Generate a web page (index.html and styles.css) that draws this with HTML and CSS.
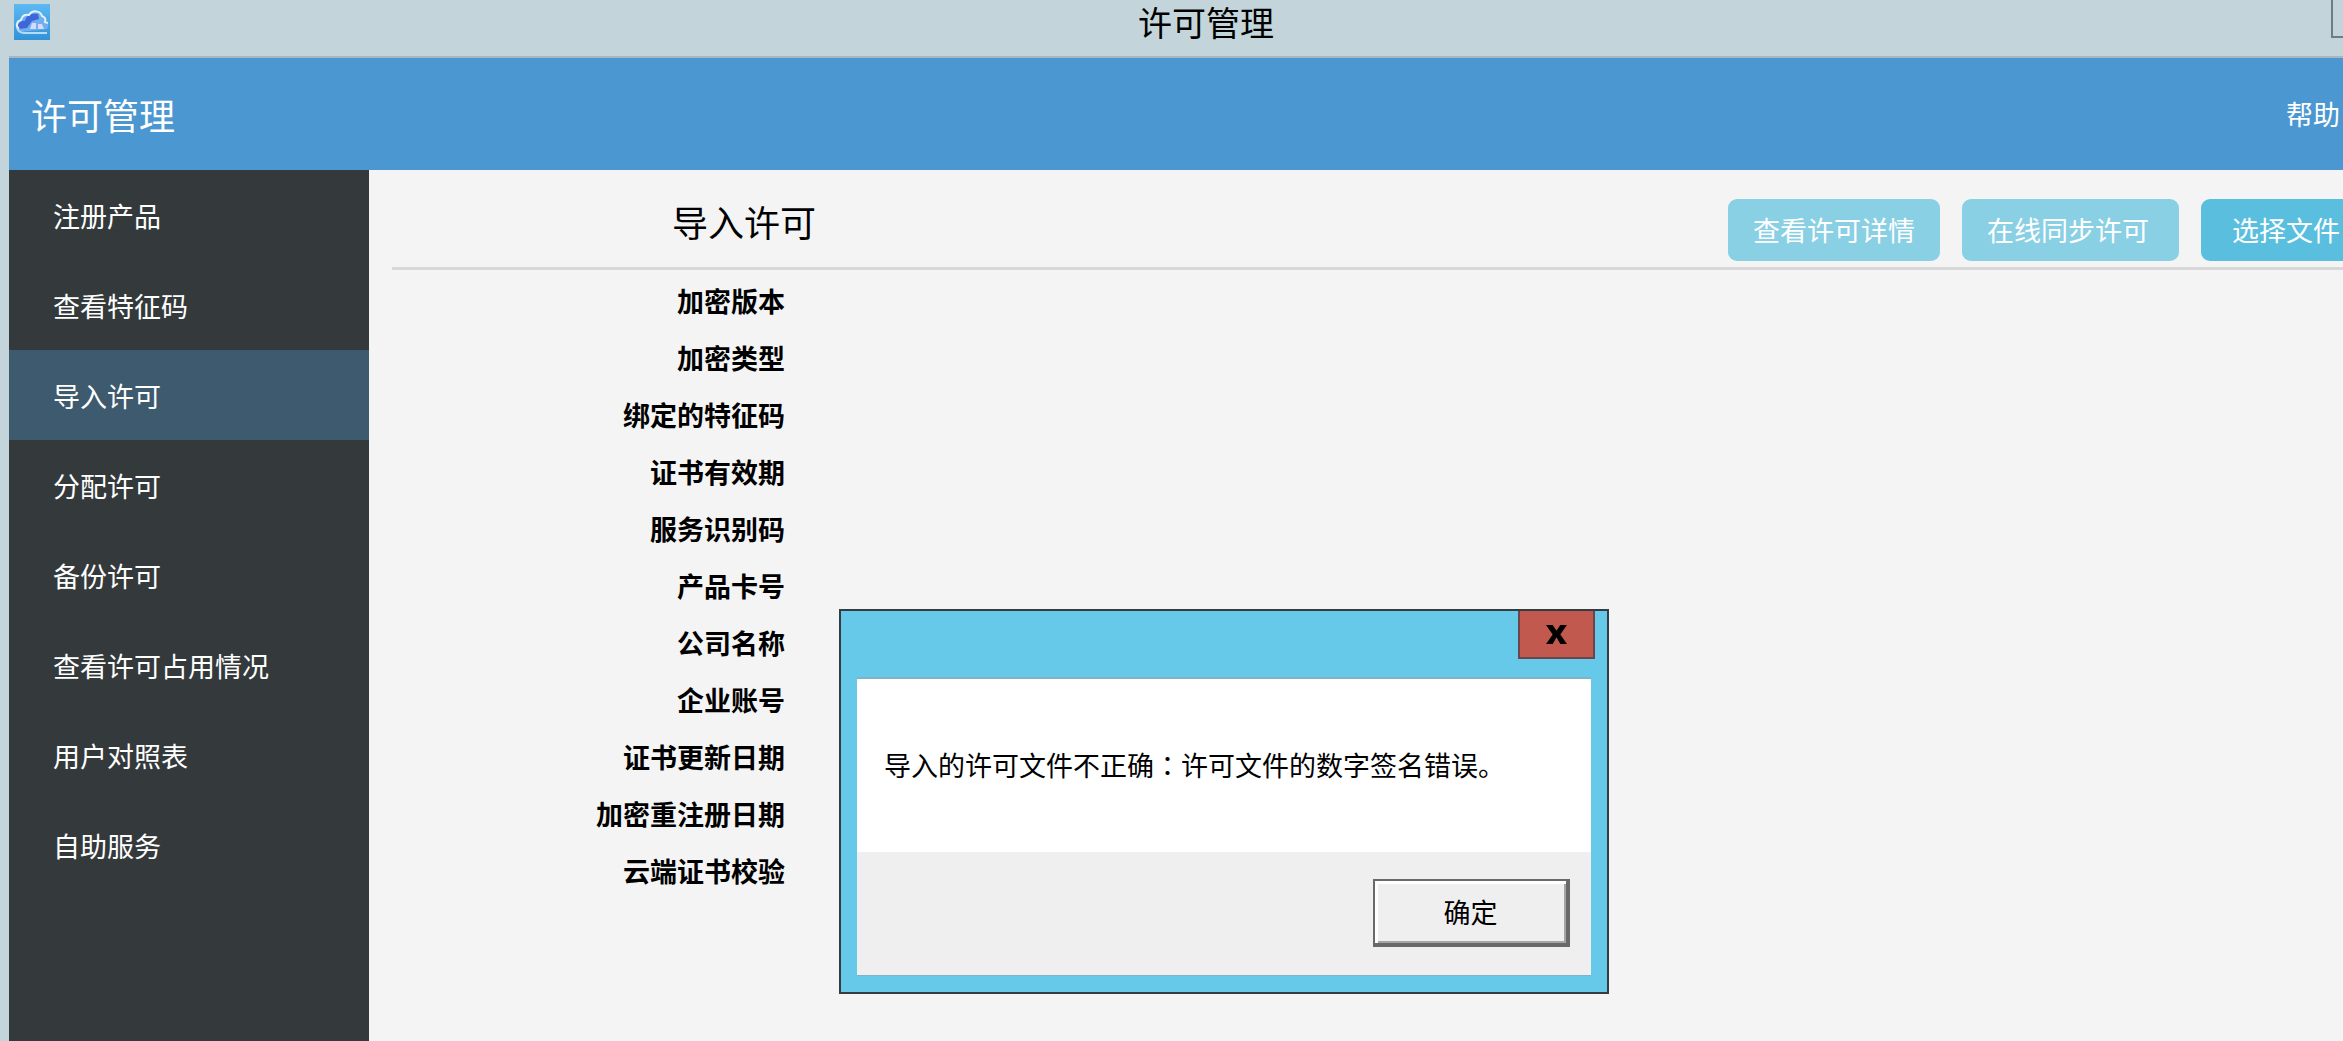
FILE: index.html
```html
<!DOCTYPE html>
<html lang="zh-CN">
  <head>
    <meta charset="utf-8" />
    <meta name="viewport" content="width=device-width, initial-scale=1.0" />
    <title>许可管理</title>
    <link rel="stylesheet" href="styles.css">
  </head>

  <body>
    <div class="window">
      <div class="titlebar">
        <svg class="app-icon" viewBox="0 0 36 36" aria-hidden="true">
          <defs>
            <linearGradient id="icon-bg" x1="0" y1="0" x2="0" y2="1">
              <stop offset="0" stop-color="#5cb9f2" />
              <stop offset="1" stop-color="#3192d6" />
            </linearGradient>
          </defs>
          <rect width="36" height="36" fill="url(#icon-bg)" />
          <path d="M6 28C1 26 1 19 6 17C6 12 11 10 14 12C17 6 26 6 28 12C31 12 32 15 31 18C35 19 35 23 33 25Z" fill="#70aeee" />
          <path d="M5 25C2 20 7 16 11 17C12 11 18 9 24 10L25 15L18 17L13 24Z" fill="#3f66d8" />
          <path d="M16 25L18 19L22 19L22 25ZM24 25L24 20L28 20L30 25Z" fill="#d5d9fb" />
          <path d="M5 25C1 22 3 17 7 16C8 11 12 10 15 11C18 6 26 6 28 12C31 13 32 15 31 18L34 19" fill="none" stroke="#e4efff" stroke-width="2" />
          <path d="M3 24Q5 29 10 29H33" fill="none" stroke="#b5dbfa" stroke-width="2" />
        </svg>
        <span class="window-title">许可管理</span>
        <button class="window-control" aria-label="最小化"></button>
      </div>

      <header class="app-header">
        <span class="app-name">许可管理</span>
        <a href="#" class="help-link">帮助</a>
      </header>

      <div class="app-body">
        <nav class="sidebar">
          <a href="#">注册产品</a>
          <a href="#">查看特征码</a>
          <a href="#" class="active">导入许可</a>
          <a href="#">分配许可</a>
          <a href="#">备份许可</a>
          <a href="#">查看许可占用情况</a>
          <a href="#">用户对照表</a>
          <a href="#">自助服务</a>
        </nav>

        <main class="content">
          <div class="page-head">
            <h1>导入许可</h1>
            <div class="actions">
              <button class="btn" disabled>查看许可详情</button>
              <button class="btn btn-sync" disabled>在线同步许可</button>
              <button class="btn btn-wide">选择文件</button>
            </div>
          </div>
          <dl class="license-info">
            <dt>加密版本</dt><dd></dd>
            <dt>加密类型</dt><dd></dd>
            <dt>绑定的特征码</dt><dd></dd>
            <dt>证书有效期</dt><dd></dd>
            <dt>服务识别码</dt><dd></dd>
            <dt>产品卡号</dt><dd></dd>
            <dt>公司名称</dt><dd></dd>
            <dt>企业账号</dt><dd></dd>
            <dt>证书更新日期</dt><dd></dd>
            <dt>加密重注册日期</dt><dd></dd>
            <dt>云端证书校验</dt><dd></dd>
          </dl>
        </main>
      </div>
    </div>

    <div class="dialog" role="alertdialog" aria-describedby="dialog-message">
      <div class="dialog-titlebar">
        <button class="dialog-close" aria-label="关闭">
          <svg viewBox="0 0 22 20" aria-hidden="true">
            <path d="M0 0H7L11 6L15 0H22L15 10L22 20H15L11 13L7 20H0L7 10Z" />
          </svg>
        </button>
      </div>
      <div class="dialog-client">
        <p class="dialog-message" id="dialog-message">导入的许可文件不正确<span class="colon" lang="zh-TW">：</span>许可文件的数字签名错误。</p>
        <div class="dialog-footer">
          <button class="dialog-ok">确定</button>
        </div>
      </div>
    </div>
  </body>
</html>
```
FILE: styles.css
```css
* {
  box-sizing: border-box;
}

body {
  margin: 0;
  height: 100vh;
  overflow: hidden;
  background: #c3d5da;
  color: #000;
  font: 27px/36px "Noto Sans CJK SC", sans-serif;
}

a {
  color: inherit;
  text-decoration: none;
}

button {
  font: inherit;
  color: inherit;
  white-space: nowrap;
}

/* main window */
.window {
  display: flex;
  flex-direction: column;
  height: 100%;
  padding-left: 9px;
}

.titlebar {
  display: grid;
  grid-template-columns: 1fr auto 1fr;
  align-items: start;
  height: 58px;
  border-bottom: 2px solid #a9b7bd;
}

.app-icon {
  width: 36px;
  height: 36px;
  margin: 4px 0 0 5px;
}

.window-title {
  margin-left: 60px;
  font-size: 34px;
  line-height: 44px;
}

.window-control {
  justify-self: end;
  width: 12px;
  height: 38px;
  padding: 0;
  border: solid #707d86;
  border-width: 0 0 2px 2px;
  background: none;
}

.app-header {
  display: flex;
  align-items: center;
  justify-content: space-between;
  height: 112px;
  padding: 0 3px 0 22px;
  background: #4b97d1;
  color: #fff;
}

.app-name {
  font-size: 36px;
}

.app-body {
  display: flex;
  flex: 1;
  min-height: 0;
}

.sidebar {
  flex: none;
  width: 360px;
  background: #343a3c;
  color: #fff;
}

.sidebar a {
  display: block;
  padding: 28px 44px 26px;
}

.sidebar a.active {
  background: #3d5a6e;
}

.content {
  flex: 1;
  min-width: 0;
  padding-left: 23px;
  background: #f4f4f4;
}

.page-head {
  display: flex;
  align-items: center;
  justify-content: space-between;
  height: 100px;
  padding-left: 280px;
  border-bottom: 3px solid #d8d8d8;
}

h1 {
  margin: 0;
  padding-top: 4px;
  font-size: 36px;
  font-weight: 400;
}

/* the last button runs past the window edge */
.actions {
  display: flex;
  gap: 22px;
  margin-right: -28px;
  padding-top: 23px;
}

.btn {
  height: 62px;
  padding: 0 25px;
  border: 0;
  border-radius: 9px;
  background: #5abfde;
  color: #fff;
}

.btn:disabled {
  background: #89d0e4;
}

.btn-sync {
  padding-right: 30px;
}

.btn-wide {
  padding: 0 31px;
}

.license-info {
  display: grid;
  grid-template-columns: 393px 1fr;
  margin: 2px 0 0;
  line-height: 57px;
}

.license-info dt {
  font-weight: 700;
  text-align: right;
}

.license-info dd {
  margin: 0;
}

/* message box */
.dialog {
  position: absolute;
  top: 609px;
  left: 839px;
  width: 770px;
  padding: 0 16px 16px;
  border: 2px solid #343c42;
  background: #66c9e9;
}

.dialog-titlebar {
  display: flex;
  justify-content: flex-end;
  height: 66px;
  margin-right: -4px;
}

.dialog-close {
  display: flex;
  align-items: center;
  justify-content: center;
  width: 77px;
  height: 48px;
  padding: 0;
  border: 2px solid #6b454a;
  border-top: 0;
  background: #c1594e;
}

.dialog-close svg {
  width: 21px;
  height: 19px;
}

.dialog-client {
  border: solid #7fb4c8;
  border-width: 2px 0 1px;
  background: #efefef;
}

.dialog-message {
  margin: 0;
  padding: 68px 27px 69px;
  background: #fff;
}

/* the zh-TW form of the full-width colon is centred */
.colon {
  font-family: "Noto Sans CJK TC", sans-serif;
}

.dialog-footer {
  display: flex;
  justify-content: flex-end;
  padding: 27px 21px 28px;
}

.dialog-ok {
  width: 197px;
  height: 68px;
  padding: 0;
  border: solid #696969;
  border-width: 2px 4px 4px 2px;
  background: #efefef;
  box-shadow: inset 3px 3px #fff, inset -2px -2px #a5a5a5;
}
```
